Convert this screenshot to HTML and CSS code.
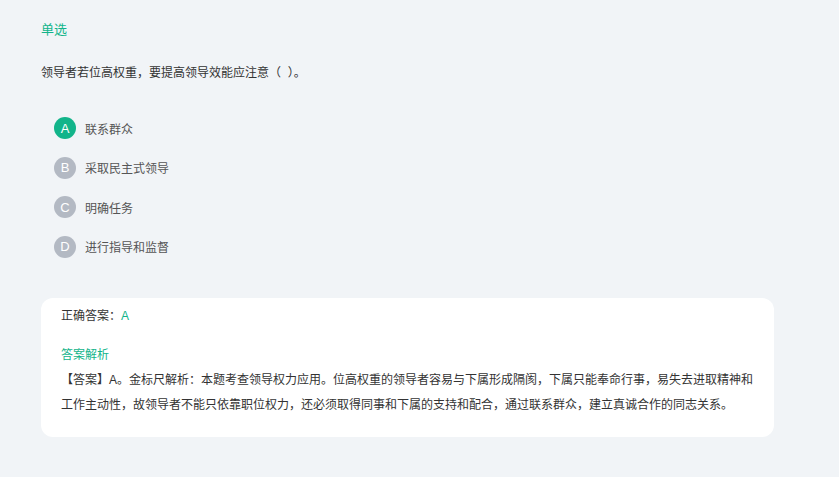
FILE: index.html
```html
<!DOCTYPE html>
<html lang="zh">
<head>
<meta charset="utf-8">
<link rel="stylesheet" href="styles.css">
</head>
<body>
<div class="page">
  <div class="type">单选</div>
  <div class="question">领导者若位高权重，要提高领导效能应注意（&nbsp;&nbsp;）。</div>
  <ul class="options">
    <li class="option correct"><span class="letter">A</span><span class="text">联系群众</span></li>
    <li class="option"><span class="letter">B</span><span class="text">采取民主式领导</span></li>
    <li class="option"><span class="letter">C</span><span class="text">明确任务</span></li>
    <li class="option"><span class="letter">D</span><span class="text">进行指导和监督</span></li>
  </ul>
  <div class="card">
    <div class="answer">正确答案：<span class="green">A</span></div>
    <div class="analysis-title">答案解析</div>
    <div class="analysis">【答案】A。金标尺解析：本题考查领导权力应用。位高权重的领导者容易与下属形成隔阂，下属只能奉命行事，易失去进取精神和工作主动性，故领导者不能只依靠职位权力，还必须取得同事和下属的支持和配合，通过联系群众，建立真诚合作的同志关系。</div>
  </div>
</div>
</body>
</html>
```
FILE: styles.css
```css
html, body {
  margin: 0;
  padding: 0;
  background: #f1f4f7;
}
body {
  font-family: "Liberation Sans", "Noto Sans CJK SC", sans-serif;
  color: #333;
  height: 477px;
  overflow: hidden;
}
.page {
  width: 733px;
  padding: 22px 0 0 41px;
}
.type {
  font-size: 13px;
  line-height: 16px;
  color: #12b48a;
}
.question {
  margin-top: 27px;
  font-size: 12px;
  line-height: 16px;
  color: #333;
}
.options {
  list-style: none;
  margin: 36px 0 0 13px;
  padding: 0;
  display: flex;
  flex-direction: column;
  gap: 17.5px;
}
.option {
  display: flex;
  align-items: center;
  height: 22px;
}
.letter {
  width: 22px;
  height: 22px;
  border-radius: 50%;
  background: #b3b9c3;
  color: #fff;
  font-size: 13px;
  display: flex;
  align-items: center;
  justify-content: center;
  margin-right: 9px;
}
.correct .letter {
  background: #12b48a;
}
.text {
  font-size: 12px;
  color: #555;
}
.card {
  margin-top: 40px;
  background: #fff;
  border-radius: 12px;
  padding: 8px 20px 19px 20px;
  font-size: 12px;
}
.answer {
  line-height: 20px;
  color: #333;
}
.green {
  color: #12b48a;
}
.analysis-title {
  margin-top: 17.5px;
  line-height: 25px;
  color: #12b48a;
}
.analysis {
  line-height: 25px;
  color: #333;
}
```
